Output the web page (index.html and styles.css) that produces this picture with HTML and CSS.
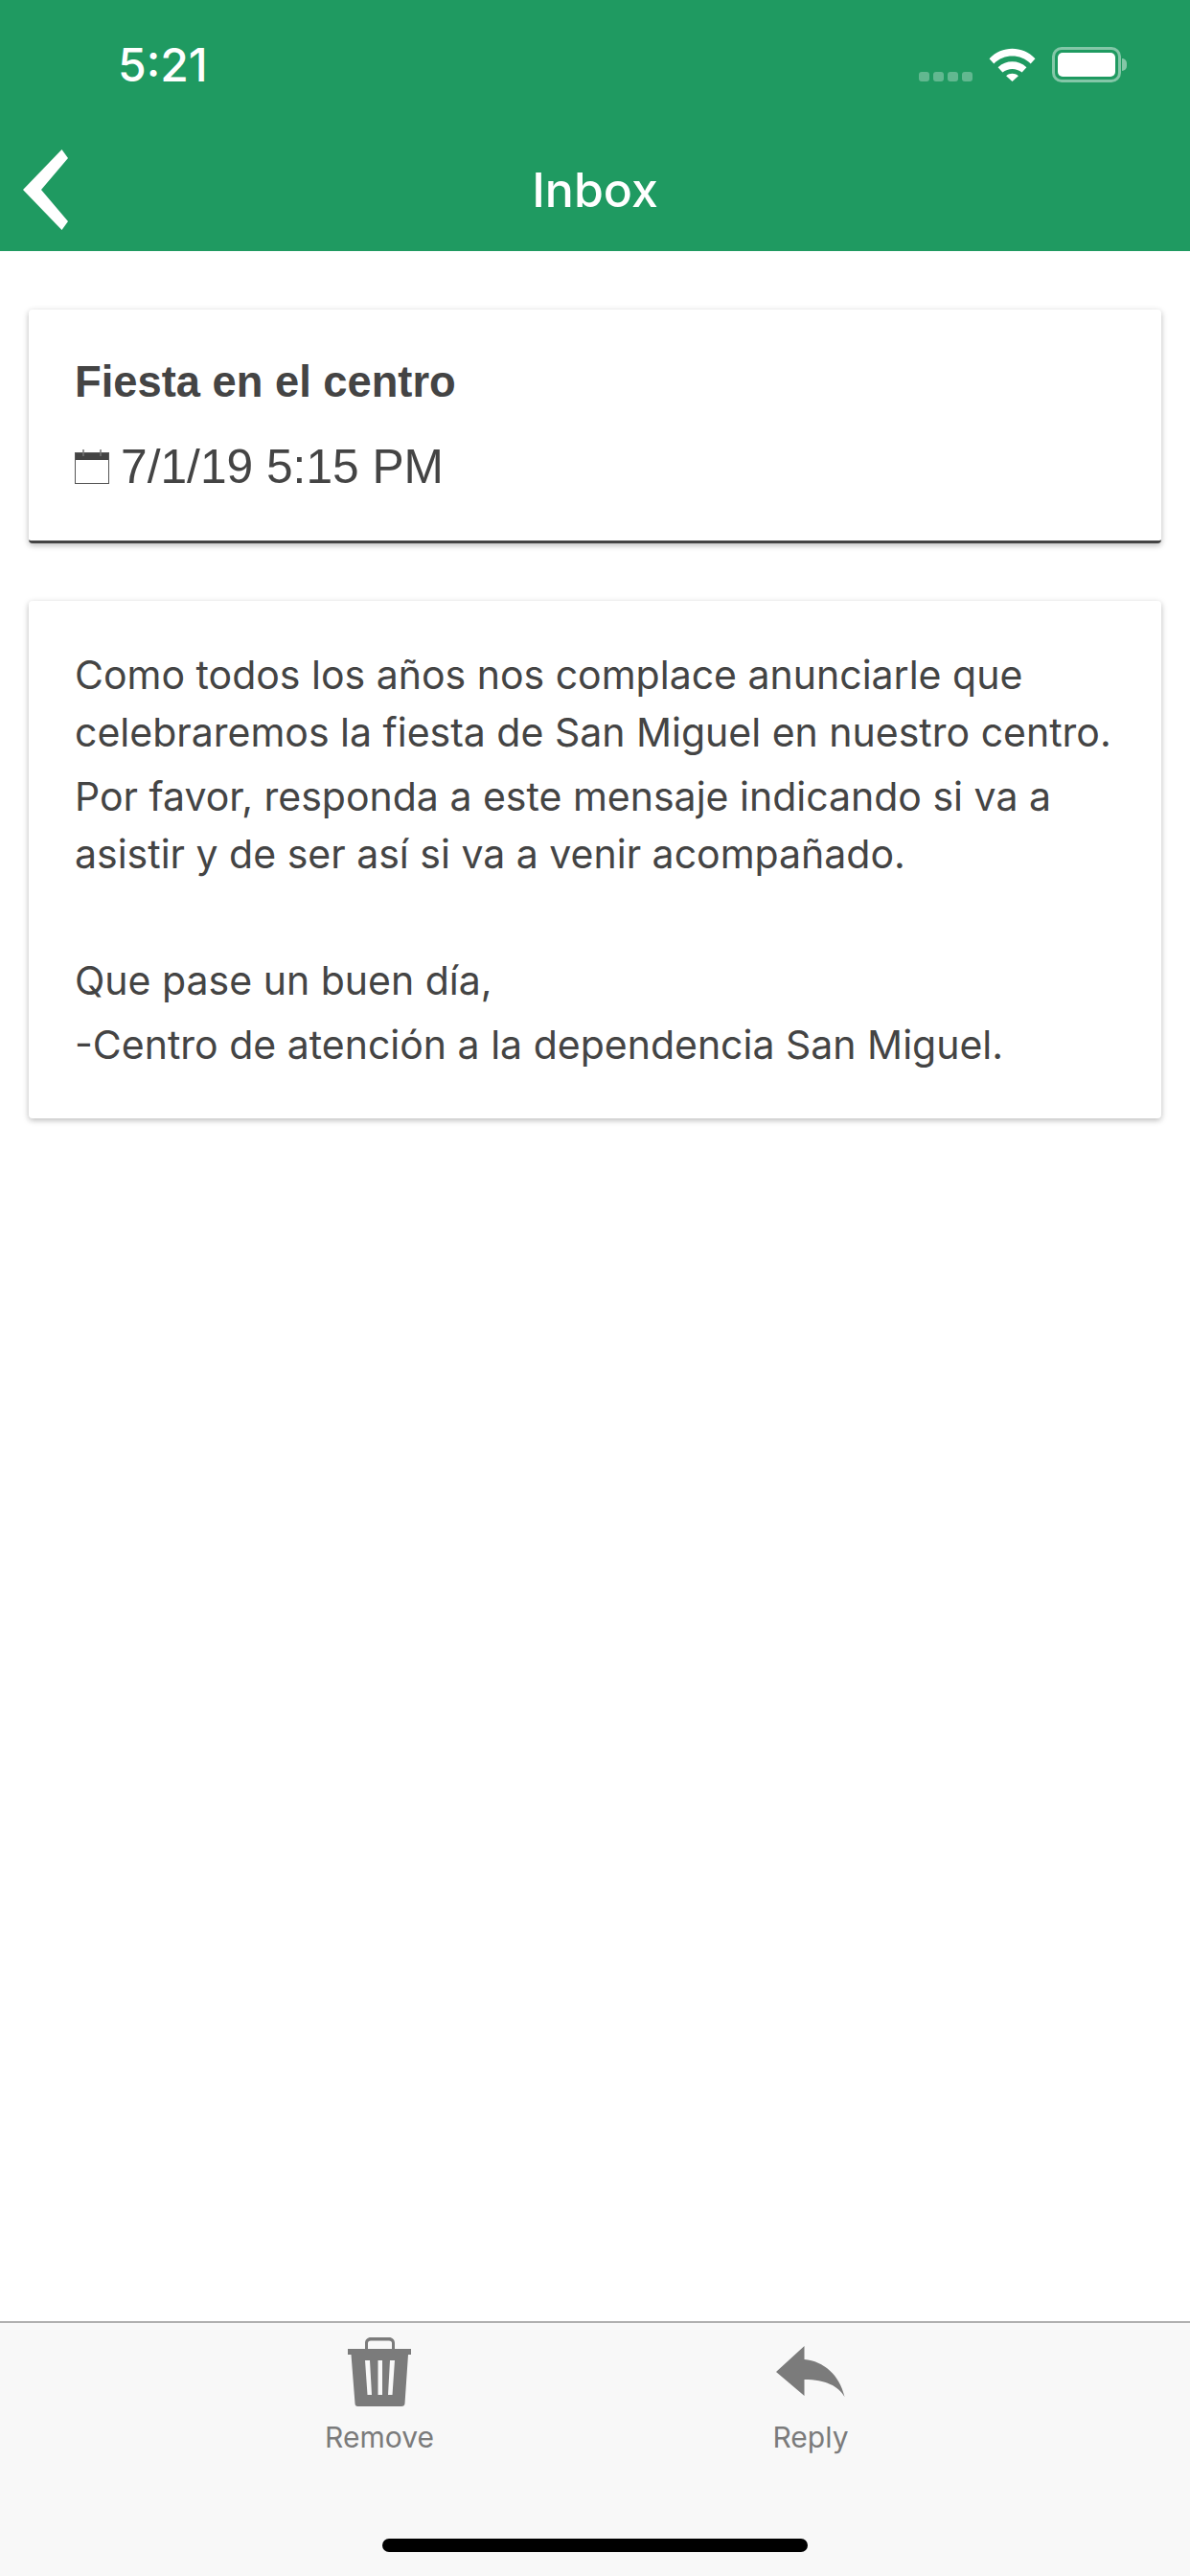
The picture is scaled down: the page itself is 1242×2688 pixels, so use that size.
FILE: index.html
```html
<!DOCTYPE html>
<html lang="en">
<head>
  <meta charset="UTF-8">
  <meta name="viewport" content="width=device-width, initial-scale=1.0">
  <title>Inbox</title>
  <link rel="stylesheet" href="styles.css">
</head>
<body>
  <div class="screen">

    <!-- Green header with status bar -->
    <header class="header">
      <div class="status-bar">
        <span class="clock">5:21</span>
        <div class="status-icons">
          <div class="signal"><i></i><i></i><i></i><i></i></div>
          <svg class="wifi" width="49" height="36" viewBox="0 0 46 34" preserveAspectRatio="none">
            <path d="M0.5 11.5C13 -1.5 33 -1.5 45.5 11.5L41 16.5C31 6.5 15 6.5 5 16.5Z" fill="#fff"/>
            <path d="M9 20C17 12.5 29 12.5 37 20L32.5 25C27 20.5 19 20.5 13.5 25Z" fill="#fff"/>
            <path d="M17 28.5C20.5 25.5 25.5 25.5 29 28.5L23 34Z" fill="#fff"/>
          </svg>
          <div class="battery"><div class="battery-level"></div></div>
          <div class="battery-cap"></div>
        </div>
      </div>
      <div class="nav-bar">
        <svg class="back" width="50" height="84" viewBox="0 0 50 84">
          <path d="M41.5 0L48 9L20 42L48 75L41.5 84L1 42Z" fill="#fff"/>
        </svg>
        <h1 class="title">Inbox</h1>
      </div>
    </header>

    <!-- Message -->
    <main class="content">
      <section class="card card-head">
        <h2 class="subject">Fiesta en el centro</h2>
        <div class="date">
          <svg class="calendar" width="36" height="36" viewBox="0 0 36 36">
            <rect x="0.5" y="3.5" width="35" height="32" fill="none" stroke="#555" stroke-width="1"/>
            <rect x="1" y="4" width="34" height="7" fill="#444"/>
            <path d="M9 0V7M27 0V7" stroke="#777" stroke-width="1.5"/>
          </svg>
          <span>7/1/19 5:15 PM</span>
        </div>
      </section>

      <section class="card card-body">
        <p class="para">Como todos los años nos complace anunciarle que<br>celebraremos la fiesta de San Miguel en nuestro centro.</p>
        <p class="para">Por favor, responda a este mensaje indicando si va a<br>asistir y de ser así si va a venir acompañado.</p>
        <p class="para blank"></p>
        <p class="para">Que pase un buen día,</p>
        <p class="para">-Centro de atención a la dependencia San Miguel.</p>
      </section>
    </main>

    <!-- Bottom actions -->
    <footer class="toolbar">
      <div class="actions">
        <div class="action">
          <div class="action-icon">
            <svg width="66" height="72" viewBox="0 0 66 72">
              <path fill-rule="evenodd" fill="#7b7b7b" d="M18 12V6C18 2.5 20.5 0 24 0H43C46.5 0 49 2.5 49 6V12H66V18H63L59.5 69C59.5 71 58 72 56 72H10.5C8.5 72 7.5 71 7.5 69L3.5 18H0V12ZM21 12H46V6C46 4.5 45 3.5 43 3.5H24C22 3.5 21 4.5 21 6ZM18 24L20.5 60H25L23 24ZM31.5 24V60H36V24ZM44 24L42 60H46.5L49 24Z"/>
            </svg>
          </div>
          <span class="action-label">Remove</span>
        </div>
        <div class="action">
          <div class="action-icon">
            <svg width="72" height="54" viewBox="0 0 72 54">
              <path fill="#7b7b7b" d="M29.5 0V14C50 16 66 30 71.5 53C65 42 52 35 29.5 35V52L0 27Z"/>
            </svg>
          </div>
          <span class="action-label">Reply</span>
        </div>
      </div>
      <div class="home-bar"></div>
    </footer>

  </div>
</body>
</html>
```

FILE: styles.css
```css
* {
  box-sizing: border-box;
}

html, body {
  margin: 0;
  padding: 0;
  background-color: #fff;
}

.screen {
  width: 1242px;
  height: 2688px;
  display: flex;
  flex-direction: column;
  overflow: hidden;
  font-family: "Liberation Sans", Arial, sans-serif;
  color: #444;
}

/* Header */
.header {
  height: 262px;
  background-color: #1f9a61;
  color: #fff;
  flex-shrink: 0;
}

.status-bar {
  height: 131px;
  display: flex;
  justify-content: space-between;
  align-items: flex-start;
  padding: 43px 66px 0 123px;
}

.clock {
  font-family: Inter, sans-serif;
  font-size: 48px;
  line-height: 50px;
  font-weight: 500;
}

.status-icons {
  display: flex;
  align-items: flex-start;
  padding-top: 6px;
}

.signal {
  display: flex;
  gap: 4px;
  margin: 26px 17px 0 0;
}

.signal i {
  width: 11px;
  height: 10px;
  border-radius: 3px;
  background-color: rgba(255, 255, 255, 0.3);
}

.wifi {
  margin-right: 17px;
}

.battery {
  width: 72px;
  height: 37px;
  border: 3px solid rgba(255, 255, 255, 0.45);
  border-radius: 10px;
  padding: 3px;
}

.battery-level {
  height: 100%;
  background-color: #fff;
  border-radius: 5px;
}

.battery-cap {
  width: 5px;
  height: 13px;
  margin: 12px 0 0 1px;
  background-color: rgba(255, 255, 255, 0.45);
  border-radius: 0 5px 5px 0;
}

.nav-bar {
  position: relative;
  height: 131px;
  display: flex;
  align-items: center;
  justify-content: center;
}

.back {
  position: absolute;
  left: 23px;
  top: 25px;
}

.title {
  margin: 0 0 -3px;
  font-family: Inter, sans-serif;
  font-size: 50px;
  font-weight: 500;
}

/* Cards */
.content {
  flex: 1;
  padding: 61px 30px 0;
  display: flex;
  flex-direction: column;
  gap: 60px;
}

.card {
  background-color: #fff;
  border-radius: 4px;
  padding: 0 48px;
  box-shadow: 0 2px 6px rgba(0, 0, 0, 0.28);
}

.card-head {
  height: 244px;
  padding-top: 46px;
  border-bottom: 3px solid #444;
}

.subject {
  margin: 0;
  font-size: 45.3px;
  line-height: 60px;
  font-weight: 700;
}

.date {
  display: flex;
  align-items: center;
  gap: 12px;
  margin-top: 29px;
  font-size: 49.7px;
  line-height: 58px;
}

.card-body {
  height: 540px;
  padding-top: 47px;
  font-family: Inter, sans-serif;
  font-size: 41px;
  line-height: 60px;
}

.para {
  margin: 0 0 7px;
}

.blank {
  height: 65px;
  margin: 0;
}

/* Bottom toolbar */
.toolbar {
  height: 266px;
  flex-shrink: 0;
  border-top: 2px solid #b0b0b0;
  background-color: #f8f8f8;
  display: flex;
  flex-direction: column;
  align-items: center;
}

.actions {
  width: 100%;
  display: flex;
  gap: 330px;
  padding: 15px 0 0 336px;
}

.action {
  width: 120px;
  display: flex;
  flex-direction: column;
  align-items: center;
}

.action-icon {
  height: 72px;
  display: flex;
  align-items: center;
}

.action-label {
  margin-top: 14px;
  font-family: Inter, sans-serif;
  font-size: 30px;
  line-height: 36px;
  color: #7b7b7b;
}

.home-bar {
  width: 444px;
  height: 14px;
  margin-top: 88px;
  border-radius: 7px;
  background-color: #000;
}
```
